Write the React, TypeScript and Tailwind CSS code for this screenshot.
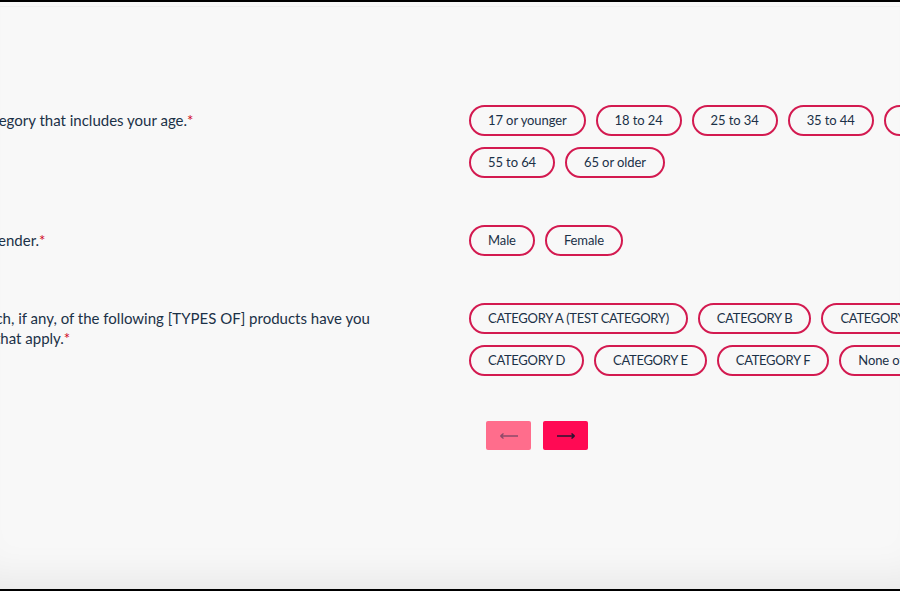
import React from "react";

const FONT = "font-['Lato','Open_Sans',sans-serif]";

const AGES = ["17 or younger", "18 to 24", "25 to 34", "35 to 44", "45 to 54", "55 to 64", "65 or older"];
const GENDERS = ["Male", "Female"];
const PRODUCTS = [
  "CATEGORY A (TEST CATEGORY)",
  "CATEGORY B",
  "CATEGORY C",
  "CATEGORY D",
  "CATEGORY E",
  "CATEGORY F",
  "None of the above",
];

type Line = { text: string; shift: string };

function Pill({ label }: { label: string }) {
  const upper = label === label.toUpperCase();
  return (
    <button
      className={
        "h-[31px] whitespace-nowrap rounded-full border-2 border-[#d31a50] bg-transparent px-[17px] text-[13px] leading-none text-[#1b3147] " +
        (upper ? "tracking-[-0.3px]" : "tracking-[-0.1px]")
      }
    >
      {label}
    </button>
  );
}

function Question({ lines, options }: { lines: Line[]; options: string[] }) {
  return (
    <div className="flex items-start">
      <div className="w-[469px] shrink-0 overflow-hidden pt-[5px] text-[15px] leading-[20px] text-[#1b3147]">
        {lines.map((l, i) => (
          <div key={i} className={"whitespace-nowrap " + l.shift}>
            {l.text}
            {i === lines.length - 1 && <span className="text-[#d0021b]">*</span>}
          </div>
        ))}
      </div>
      <div className="flex w-[560px] shrink-0 flex-wrap gap-x-[10px] gap-y-[11px]">
        {options.map((o) => (
          <Pill key={o} label={o} />
        ))}
      </div>
    </div>
  );
}

export default function App() {
  return (
    <div
      className={
        FONT +
        " relative h-[591px] w-full overflow-hidden border-y-2 border-black bg-[#f8f8f8] shadow-[inset_0_-40px_40px_-30px_rgba(0,0,0,0.07)]"
      }
    >
      <div className="h-[5px] border-b border-[#f0f0f0]" />
      <div className="flex flex-col pt-[98px]">
        <Question
          lines={[{ text: "Please select the age category that includes your age.", shift: "ml-[-162px]" }]}
          options={AGES}
        />
        <div className="mt-[47px]">
          <Question lines={[{ text: "Please select your gender.", shift: "ml-[-131px]" }]} options={GENDERS} />
        </div>
        <div className="mt-[47px]">
          <Question
            lines={[
              { text: "Which, if any, of the following [TYPES OF] products have you", shift: "ml-[-32px]" },
              { text: "used? Select all that apply.", shift: "ml-[-109px]" },
            ]}
            options={PRODUCTS}
          />
        </div>
        <div className="ml-[486px] mt-[45px] flex gap-[12px]">
          <button className="flex h-[29px] w-[45px] items-center justify-center rounded-[2px] bg-[#ff6d8c]">
            <svg width="20" height="8" viewBox="0 0 20 8" fill="none">
              <path d="M19 4H1.5M1.5 4L4.5 1.5M1.5 4L4.5 6.5" stroke="#8c4a68" strokeWidth="1.4" />
            </svg>
          </button>
          <button className="flex h-[29px] w-[45px] items-center justify-center rounded-[2px] bg-[#ff0a54]">
            <svg width="20" height="8" viewBox="0 0 20 8" fill="none">
              <path d="M1 4H18.5M18.5 4L15.5 1.5M18.5 4L15.5 6.5" stroke="#2a1430" strokeWidth="1.6" />
            </svg>
          </button>
        </div>
      </div>
    </div>
  );
}
